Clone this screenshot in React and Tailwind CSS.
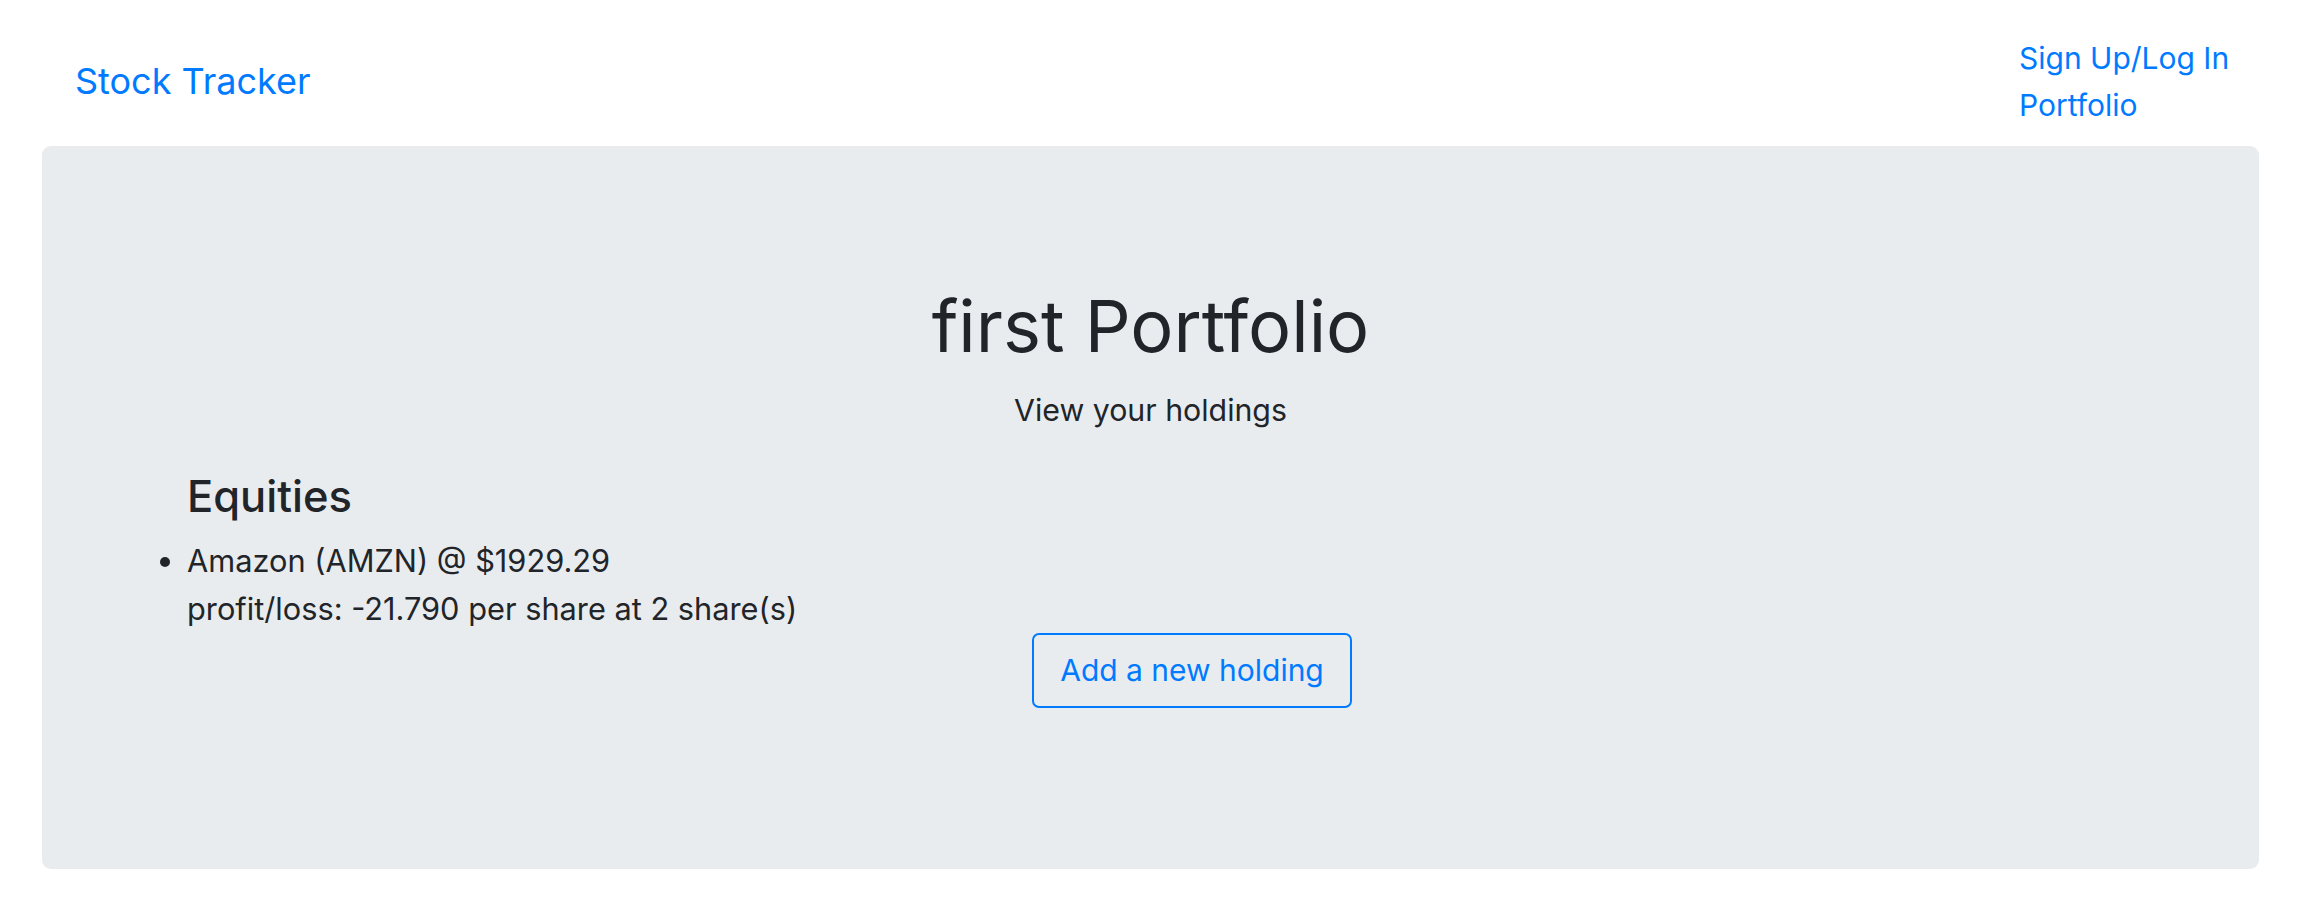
export default function App() {
  return (
    <div className="min-h-[922px] bg-white text-[#212529]" style={{ fontFamily: 'Inter, "Noto Sans", sans-serif' }}>
      <nav className="relative h-[146px]">
        <a href="#" className="absolute left-[75px] top-[63px] text-[36px] leading-[36px] text-[#007bff]">Stock Tracker</a>
        <div className="absolute left-[2019px] top-[35px] flex flex-col text-[30px] leading-[47px] text-[#007bff]">
          <a href="#">Sign Up/Log In</a>
          <a href="#">Portfolio</a>
        </div>
      </nav>
      <div className="pl-[42px] pr-[63px]">
        <div className="h-[723px] rounded-[9px] bg-[#e9ecef] pt-[140px]">
          <h1 className="text-center text-[72px] leading-[80px] font-normal">first Portfolio</h1>
          <p className="mt-[24px] text-center text-[30.3px] leading-[40px]">View your holdings</p>
          <div className="pl-[145px]">
            <h3 className="mt-[39px] text-[43.5px] leading-[54px] font-medium">Equities</h3>
            <ul className="mt-[14px] list-disc list-outside text-[30.75px] leading-[48px]">
              <li>
                Amazon (AMZN) @ $1929.29
                <br />
                profit/loss: -21.790 per share at 2 share(s)
              </li>
            </ul>
          </div>
          <div className="pl-[990px]">
            <button className="h-[75px] w-[320px] rounded-[7px] border-[2px] border-[#007bff] text-[30px] text-[#007bff]">
              Add a new holding
            </button>
          </div>
        </div>
      </div>
    </div>
  );
}
